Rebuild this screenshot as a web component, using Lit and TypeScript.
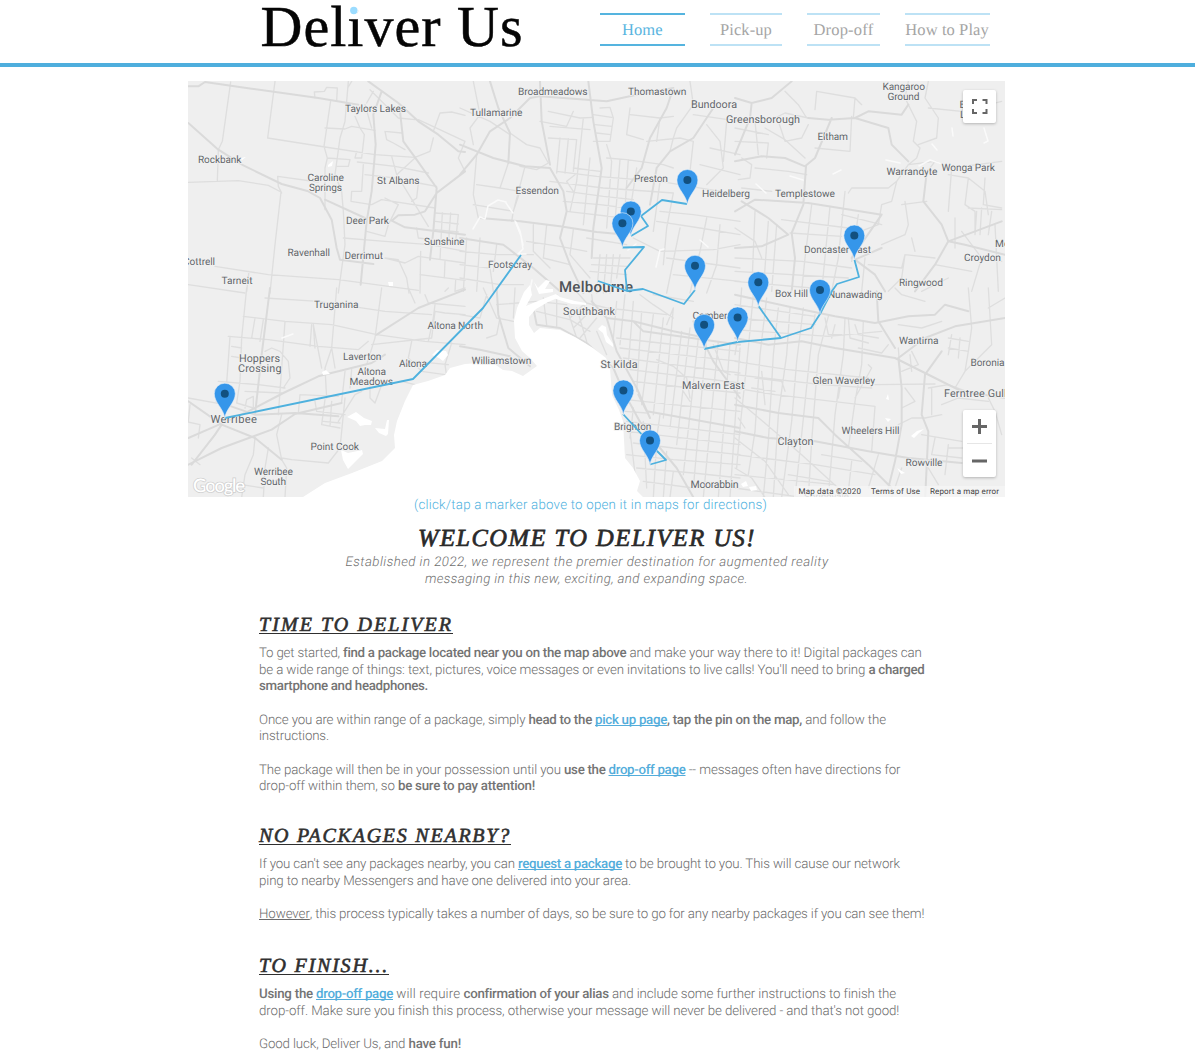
import { LitElement, html, svg, css } from "lit";
import { customElement } from "lit/decorators.js";

/* A run of text: content, drawn width in px, style flags (b bold, a link, u underline). */
type Run = [string, number, string?];

const sections: { title: Run; cls: string; lines: Run[][] }[] = [
  {
    title: ["TIME TO DELIVER", 194],
    cls: "first",
    lines: [
      [["To get started, ", 84], ["find a package located near you on the map above", 283, "b"], [" and make your way there to it! Digital packages can", 295.5]],
      [["be a wide range of things: text, pictures, voice messages or even invitations to live calls! You'll need to bring ", 609.5], ["a charged", 56, "b"]],
      [["smartphone and headphones.", 169, "b"]],
      [],
      [["Once you are within range of a package, simply ", 269.5], ["head to the ", 66.5, "b"], ["pick up page", 72, "b a"], [", tap the pin on the map,", 135, "b"], [" and follow the", 84]],
      [["instructions.", 70]],
      [],
      [["The package will then be in your possession until you ", 305], ["use the ", 44.5, "b"], ["drop-off page", 77, "b a"], [" -- messages often have directions for", 215]],
      [["drop-off within them, so ", 139], ["be sure to pay attention!", 137, "b"]],
    ],
  },
  {
    title: ["NO PACKAGES NEARBY?", 252],
    cls: "second",
    lines: [
      [["If you can't see any packages nearby, you can ", 259], ["request a package", 104, "b a"], [" to be brought to you. This will cause our network", 278]],
      [["ping to nearby Messengers and have one delivered into your area.", 372]],
      [],
      [["However", 50, "u"], [", this process typically takes a number of days, so be sure to go for any nearby packages if you can see them!", 614.5]],
    ],
  },
  {
    title: ["TO FINISH...", 130],
    cls: "third",
    lines: [
      [["Using the ", 57, "b"], ["drop-off page", 77, "b a"], [" will require ", 70.5], ["confirmation of your alias", 145, "b"], [" and include some further instructions to finish the", 287]],
      [["drop-off. Make sure you finish this process, otherwise your message will never be delivered - and that's not good!", 640]],
      [],
      [["Good luck, Deliver Us, and ", 149.5], ["have fun!", 52.5, "b"]],
    ],
  },
];

const nav: [string, number, number][] = [
  ["Home", 85.5, 40.5],
  ["Pick-up", 72.5, 52],
  ["Drop-off", 73, 60],
  ["How to Play", 85, 83.5],
];

/* Map place names: text, left, right, vertical centre, size. */
const places: [string, number, number, number, number?][] = [
  ["Broadmeadows", 518, 587.5, 91.5], ["Thomastown", 628, 686.5, 91.5], ["Taylors Lakes", 345, 406, 108.6],
  ["Tullamarine", 470, 522.5, 112], ["Bundoora", 691, 737, 104.7, 10.8], ["Greensborough", 726, 800, 119.7, 10.8],
  ["Kangaroo", 882.5, 925, 86.6], ["Ground", 887.5, 919.5, 96.7], ["Eltham", 817.5, 848, 136.4],
  ["Rockbank", 198, 241.5, 159.6], ["Caroline", 307.5, 344, 177], ["Springs", 309, 342, 187],
  ["St Albans", 377, 419.5, 180.6], ["Essendon", 515.5, 559, 190.6], ["Preston", 634, 668, 178.8],
  ["Heidelberg", 702, 750, 193.8], ["Templestowe", 775, 835, 193.8], ["Warrandyte", 886.5, 937.5, 171.3],
  ["Wonga Park", 941.5, 995, 167.2], ["Deer Park", 346, 389, 220.4], ["Sunshine", 424, 464.5, 241.2],
  ["Ravenhall", 287.5, 330, 252.8], ["Derrimut", 344.5, 383, 255.3], ["Cottrell", 183, 215, 261],
  ["Tarneit", 221.5, 252.5, 280.3], ["Footscray", 488, 532, 264.7], ["Doncaster East", 804, 871, 249.6],
  ["Mooroolbark", 995, 1055, 243], ["Croydon", 964, 1001, 257.8], ["Ringwood", 899, 943, 282.8],
  ["Southbank", 563, 615, 311.2, 10.8], ["Camberwell", 692.5, 745, 315.2], ["Box Hill", 775, 808, 293.7],
  ["Nunawading", 828, 882.5, 294.6], ["Truganina", 314, 358.5, 304.7], ["Altona North", 427.5, 483, 325.2],
  ["Hoppers", 239, 280, 358, 10.8], ["Crossing", 238, 281.5, 368.7, 10.8], ["Laverton", 343, 381.5, 356.8],
  ["Altona", 399, 427, 363.7], ["Altona", 357.5, 386, 371], ["Meadows", 349.5, 393, 381],
  ["Williamstown", 471.5, 531.5, 360.2], ["St Kilda", 600.5, 637.5, 364.4, 10.8], ["Malvern East", 682, 744.5, 385, 10.8],
  ["Glen Waverley", 812.5, 875, 380.2], ["Wantirna", 899, 938.5, 340.2], ["Boronia", 970.5, 1004.5, 362.8],
  ["Ferntree Gully", 944, 1012, 393.7, 10.8], ["Werribee", 210.5, 257, 419.6, 11.2], ["Point Cook", 310.5, 359, 446.8],
  ["Werribee", 254, 293, 471.8], ["South", 260.5, 286, 481.8], ["Brighton", 614, 651.5, 426.8],
  ["Moorabbin", 690.5, 738.5, 484.3, 10.6], ["Clayton", 777.5, 813.5, 441.8, 10.8], ["Wheelers Hill", 841.5, 899.5, 430.1],
  ["Rowville", 905.5, 942.5, 462.6], ["Springvale", 804, 849, 496],
];

const pins: [number, number][] = [
  [224.8, 393.7], [687.4, 180], [630.8, 211.5], [622.4, 223.2], [854.3, 235.5], [695, 265.8],
  [758.3, 282.2], [820, 289.9], [737.6, 317.4], [704.1, 324.8], [623.4, 390.4], [650, 440.4],
];

const routes = [
  "M225 418 L413 379 L483 308 L521 255",
  "M687 204 L662 200 L641 216 L648 226 L631 236",
  "M622.5 247.5 L644 247 L625 270 L627 291",
  "M598 281 L627 291 L643 289 L684 304 L695 290",
  "M704 349 L737.5 342 L781 338 L811 328 L820 314 L832 291 L837 284 L859 277 L854.5 260",
  "M758.5 306 L781 338",
  "M623 414 L657 451 L666 460 L650 464.5",
];

/* Roads are stored per map tile at three units per pixel. */
const tiles: { x: number; y: number; major: string; minor: string }[] = [
  {
    x: 185, y: 78,
    major: "M10 135L100 215 175 262 290 318 370 340 405 360 440 425 455 510 465 545 565 558M420 365L540 420M620 428L660 448 840 470M550 10L640 75 700 130 760 170 820 220 840 222M10 25L40 25 60 12 200 32 400 60 520 80M590 40L565 110 572 200 560 340 545 430 527 620M645 100L655 190 690 238 755 330 745 460 735 545M840 280L755 345 720 400 690 410 640 412 620 428",
    minor: "M137 12L112 190 100 215 97 308M270 10L248 180 420 207 570 230 690 238 735 220 745 180M745 160L765 105 800 102 840 112M10 313L160 308 250 322 288 342 270 500 255 645M290 345L280 325 278 295 400 312M437 68L417 205 427 240 420 270 420 395M490 10L480 130 465 180 450 290 470 340 475 400 480 500 460 645M500 10L488 30M390 60L388 42 418 40 425 28 457 30 455 68M420 150L480 153 500 145 570 157M510 115L525 150 538 170 530 240 510 240 515 220M600 160L650 165M600 160L605 185 625 195 660 215M427 240L495 245 490 265 457 265M517 252L630 265 730 285M535 260L530 340 500 340 498 370 560 380 590 365 750 390M540 290L630 300M475 480L600 490 735 500 840 520M545 460L600 475 610 440 640 380 600 360M600 540L640 545 665 600 672 645M600 540L660 555 700 535 840 555M707 520L705 645M705 590L840 607M780 550L778 600M812 607L810 640 840 630M750 405L820 410M750 430L820 438M750 455L820 462M772 405L765 545M797 405L790 500M820 410L812 490M695 450L700 480 740 485M90 565L250 590 460 605 700 637M10 620L180 645M192 580L185 640M620 235L635 290 730 445M635 290L690 240M755 325L700 315 695 360 680 370M700 125L840 190M840 190L820 240 840 280M540 80L560 150M555 35L600 80 640 120 690 125M565 40L545 75",
  },
  {
    x: 460, y: 78,
    major: "M90 10L115 90 150 165 145 255M0 200L100 240 195 265 270 270 310 340 320 400 300 480 330 560 370 645M240 10L245 130 270 260M385 10L400 130 425 270 400 450 395 540M0 290L50 230 90 160 150 120 210 60 240 55 440 70 530 50 640 30M770 75L700 180 630 220 590 270 570 380M640 30L620 90 570 180 545 270 500 330M60 420L180 430 300 445 410 462 500 470M0 480L130 500 220 570 300 640",
    minor: "M40 10L60 110 30 150 40 200M0 90L90 130 150 170M150 165L200 200 240 210 265 255 230 275 180 265M50 230L40 350 55 420M145 255L120 330 50 320M195 265L160 400 155 430M120 330L180 340 160 400 40 380M290 280L410 295 600 310 840 350M270 310L430 330 640 345M320 340L430 355 520 365M310 370L420 380 500 390M320 400L490 420M420 90L450 88 460 120 450 190 400 190M400 110L455 118M405 140L455 145M410 165L452 170M265 100L360 120 400 118M270 145L390 155M265 180L350 185 340 280M300 180L290 285M325 182L315 285M370 120L350 310 330 400M390 240L370 440M340 270L420 280M240 130L320 145 340 100M440 240L500 245 610 260 640 270M440 200L455 250 440 450M480 245L465 430M505 245L490 460M530 270L510 400M560 190L660 180 700 190M510 110L600 120 640 115M510 90L500 170 550 185M690 10L700 80 650 150 640 180 630 220M600 120L590 190M640 345L620 450 610 560M600 310L580 460M700 190L690 280 700 330M740 140L780 190 790 270 740 320M700 110L840 130M750 210L840 230M720 260L840 290M800 130L790 250M600 400L700 410 840 430M590 430L720 450 840 470M520 480L600 520 760 515 840 500M660 450L620 645M740 420L720 520 690 645M780 440L770 560 740 645M620 540L840 570M640 590L840 610M0 520L110 530 220 530M0 560L90 570 100 640M60 480L50 640M20 480L10 640M110 500L100 580M220 440L220 520 270 570M260 440L250 540 330 560M340 455L330 530 390 600M400 540L510 540M395 560L500 565M390 580L500 590M420 530L410 645M440 530L430 645M460 530L450 645M480 530L470 600M0 600L120 620 190 620M200 490L300 505 380 520M380 480L500 500M345 290L320 310 340 340",
  },
  {
    x: 735, y: 78,
    major: "M50 75L110 60 170 10M50 75L45 120 0 230M0 400L60 365 220 375 440 410M0 60L50 75M220 120L280 125 360 120 460 150 470 200 520 250M360 120L400 100 500 110 520 80M0 250L80 235 150 240 210 265 240 240 290 120M213 265L205 380 170 465 180 540 170 640M575 285L565 370 620 440 640 490 800 430M0 510L80 505 160 470 100 420 20 370M440 510L360 545 420 590 450 640M440 410L350 540M540 640L600 560 640 490 690 500 810 530",
    minor: "M245 40L240 95M150 40L190 80 215 120M100 130L150 105 220 120M90 150L150 185 210 240M130 130L150 190 200 180 220 140M0 190L100 195 95 240M60 130L70 230M245 40L360 60 380 80M355 120L360 60M350 115L345 220 240 210M20 240L50 260 45 300 10 305M60 270L160 280 215 290M520 10L510 60 545 130 535 190 555 210 545 240 520 260M580 10L570 60 610 120 605 180 550 200M580 90L680 100 800 70M485 310L460 330 350 330 340 345M485 310L470 370 440 380 430 440 350 470M485 310L520 260 600 250 570 290M510 370L520 440 510 470 440 500M575 370L500 380M600 250L650 270 800 250M650 270L640 400M640 290L700 300 750 340 760 410M700 300L690 380 720 400 720 470M750 300L745 380 800 390M725 400L720 470M740 390L735 470M700 390L800 395M770 400L760 470M680 460L740 540 710 640M690 540L800 550M60 400L50 640M100 430L85 640M125 440L110 640M230 380L210 540 200 640M285 385L260 640M330 340L310 540 290 640M370 410L350 550M140 425L340 450M165 465L320 475M0 540L200 550 350 570M0 580L340 600M0 610L230 630M390 540L380 640M400 560L500 570 510 530 600 540M510 530L500 600 460 640M640 600L560 640M600 560L710 580M0 450L60 490 80 540M20 330L110 340M320 410L440 440M530 480L540 520M0 150L100 170M660 420L660 510M780 440L790 640",
  },
  {
    x: 185, y: 288,
    major: "M10 450L90 415 190 370 295 315 400 265 460 250 560 225 600 200M10 530L110 480 260 425 330 378 470 345M10 340L110 410 210 450 290 515M575 140L700 60 840 5M120 395L90 440 20 530M210 380L230 200 255 0M95 340L210 380 330 375 460 385",
    minor: "M185 0L170 150 165 280 155 345M175 85L300 100 440 110 575 140 720 160 840 170M130 145L250 155 400 175 520 185 550 160M135 145L125 285 115 340M140 175L170 180M140 205L170 210M300 100L280 380M210 90L200 150M235 95L225 160M455 0L440 180 420 240 425 330M590 0L570 150 545 230M100 280L220 290 300 300M240 190L260 180 285 190 310 220 315 270 295 300M410 240L385 110 390 180M380 110L375 175M390 340L395 370 480 380M345 320L340 375M345 320L460 325M420 335L410 410 465 420M440 340L435 415M480 330L465 480 430 525 320 515 290 510M460 400L510 320 530 310M415 400L465 405M290 515L275 440 290 380M290 515L305 540 300 628M210 450L205 500 180 560 170 628M250 480L240 540 235 628M0 400L45 410 40 450M10 330L120 350M15 350L10 400M75 460L90 440M20 510L45 530M170 590L235 600M155 345L205 360 205 325 185 335 180 360M560 170L740 150 750 70 780 75 840 80M720 20L730 45 840 55M670 0L690 45M750 50L745 90 730 160M780 10L790 0M680 160L670 210 710 250 780 260M690 220L790 230M800 165L780 230 785 265M650 280L690 290 680 305M555 290L555 330 570 345 590 290M240 30L400 40 600 70 740 80M440 180L450 240M480 250L470 340M500 245L495 300M180 310L290 315",
  },
  {
    x: 460, y: 288,
    major: "M220 60L230 110 300 120 380 165 460 240 490 310 550 420 600 480 650 540 700 628M440 90L470 190 530 300 570 390M395 40L440 90 520 100 640 130 740 150M110 0L115 80 145 180 210 235M0 175L60 185 150 205M520 100L550 130 840 170M535 320L560 370 620 380 840 420M700 100L760 220 840 330",
    minor: "M110 50L230 40 320 50M165 0L160 90M0 80L60 90 80 20M70 0L110 90 160 100M80 150L110 140 120 90M250 30L260 110M290 20L290 115M230 70L330 95 390 130M320 60L350 150M350 60L380 160M330 90L370 50 400 80M340 120L390 70M360 150L410 90M410 130L440 200M340 0L380 45 440 60 620 80M395 20L400 60M470 40L460 150M495 20L480 170M520 40L505 230M545 70L530 310M580 80L545 350M610 90L580 380M640 60L610 390M665 130L630 420M690 120L650 470M715 150L670 560M740 150L700 600M775 160L730 628M810 165L775 628M840 180L810 628M470 150L600 165 840 190M480 180L700 205 840 220M490 210L640 230 840 255M510 245L840 285M520 280L690 300 840 315M500 335L640 350 840 370M495 370L560 375M500 400L840 440M500 430L840 470M520 465L640 480 840 500M500 500L640 515 840 530M530 540L700 555 840 570M550 580L700 600M510 430L530 600M550 400L560 600M590 460L580 628M620 490L610 628M640 550L630 628M580 20L640 30 700 40M540 20L580 50 640 90M590 215L640 235 680 270 690 330M600 380L590 450M520 360L510 450M640 60L620 110M760 170L790 250 810 260M690 340L670 310",
  },
  {
    x: 735, y: 288,
    major: "M0 150L100 170 200 160 300 180 480 210 600 270 680 310 810 330M0 350L130 375 250 390 300 440 400 530 470 600M0 430L100 450 240 460 400 490 520 510 680 525M490 210L500 300 500 410 480 520 460 600M490 210L570 150 660 115 810 90M425 10L430 100 480 180M570 640L580 430 560 380 570 260 620 190M0 20L180 60 300 85 420 105 520 85 600 80 630 50 700 70",
    minor: "M20 0L10 140 0 200M55 20L40 180 15 420 5 540M95 30L75 200 60 430 40 560M130 60L115 200 100 460 85 628M165 60L155 200 130 380 115 628M205 60L185 220 170 400 140 628M240 80L225 200 200 440 180 628M280 85L250 200 230 460 220 628M330 90L325 200 300 380 280 628M385 100L380 230 360 340 340 480M0 50L100 65 240 85M0 90L240 110M0 125L280 145 440 130M0 220L160 245 400 270M0 260L260 290 410 300M0 300L120 320 420 355 410 490 M400 230L410 240 360 330M270 90L280 140 320 140M340 90L345 150 400 165M300 110L290 150M360 110L370 140 430 150M370 180L440 195 460 170M420 290L600 288M500 250L550 230 530 190M510 300L540 340 500 360M490 410L530 390 570 390 620 380M580 300L640 290 720 320M590 300L590 380M620 350L670 330 760 340M700 190L710 120 700 0M640 150L700 160M640 180L700 190M650 140L640 200M675 150L670 210M700 190L690 250 660 300M760 0L770 170 690 250M760 60L810 30M480 0L500 20 570 40M490 180L495 250M525 200L530 250M560 440L680 460M640 470L630 560M640 480L710 480M600 450L590 500 680 510M760 330L780 370 800 440M580 540L610 590M500 540L470 628M0 500L240 530 420 560M0 560L300 590M0 600L200 628M430 500L400 600M0 330L60 380 200 500 340 628M0 450L90 520 160 620M10 390L30 420M60 270L140 280 150 310M80 250L90 350M50 300L120 310M490 110L560 120 620 100M320 270L310 330M260 500L380 520M350 520L340 610M160 560L280 580M0 540L50 570 90 628",
  },
];

const water = [
  "M303 497L325 483 352 473 382 461 395 448 394 435 397 421 405 401 413 385 428 381 445 375 450 368 465 364 480 363 493 363 503 370 512 371 523 376 537 366 530 358 522 351 515 338 514 321 517 308 524 292 530 285 532 295 526 306 538 301 548 297 556 294 560 297 548 302 536 309 529 317 529 325 534 333 540 328 560 330 575 337 593 348 606 358 610 368 612 395 619 410 623 421 624 440 625 458 633 468 640 481 637 491 643 497Z",
  "M534 282L538 288 546 280 550 281 545 289 553 289 553 292 539 294Z",
  "M556 296L575 301 586 303 586 305 572 304 556 299Z",
  "M598 329l4-4 4 2 1 8 6 9 0 3-7-5-3-9z",
  "M347 417l9-5 8 6 8 3-1 4-6 0-5 1-4-5z",
  "M375 428l10 1 2-9 2 0-1 14-2 2-7-3z",
  "M341 450l7 3 14-3 1 4-8 8-7 7-5-9z",
  "M432 355l5-5 9 1 2 4-5 6-4-3z",
  "M322 372l4-2 4 4-7 1z",
  "M911 436l6-5 7-2-5 4-5 5z", "M885 418l6 1-3 3z", "M897 468l8 5-4 1z", "M886 399l2-5 1 6z",
  "M328 165l5-4-1 5-4 1z", "M388 282l5 0 0 4-4 0z", "M240 158l6-1-4 3z",
  "M741 484l5-3 2 5-5 1z", "M749 487l7-1 1 4-6 1z",
];
const creeks = "M515 221L521 236 523 249 518 254 526 254M473 229L480 217 485 219 488 206 498 200 506 202M506 203L513 213M516 222L520 231 523 245M656 267L660 250 664 249M700 240L708 247M790 176L803 180M833 174L841 170M932 144L937 150M952 128L953 136M984 128L988 141 984 143M886 160L900 163M919 166L930 160 942 164M628 250L636 244M282 338L293 334M532 280L529 295 522 300M756 184L766 193";

@customElement("app-root")
export class AppRoot extends LitElement {
  static styles = css`
    :host { display: block; height: 1054px; overflow: hidden; background: #fff; font-family: Roboto, "Liberation Sans", sans-serif; text-rendering: geometricPrecision; }
    .header { display: flex; box-sizing: border-box; width: 1195px; height: 67px; padding-left: 260px; border-bottom: 4px solid #4eaedd; }
    .logo { width: 339.5px; height: 63px; }
    .logo text { font: 58px "Liberation Serif", serif; fill: #050505; stroke: #050505; stroke-width: 0.5px; }
    .nav { display: flex; gap: 24.7px; padding-top: 13px; }
    .item { box-sizing: border-box; height: 33px; border: solid #bde2f5; border-width: 2px 0; color: #a5a5a5; font: 16.5px/29px "Liberation Serif", serif; text-align: center; text-decoration: none; white-space: nowrap; }
    .item.on { border-color: #55b4df; color: #5ab5e0; }
    .map { position: relative; width: 817px; height: 416px; margin: 14px 0 0 188px; }
    .canvas { display: block; width: 817px; height: 416px; }
    .major, .minor, .creek, .route { fill: none; stroke-linejoin: round; stroke-linecap: round; }
    .major { stroke: #dadada; stroke-width: 6px; }
    .minor { stroke: #dedede; stroke-width: 4px; }
    .creek { stroke: #fafafa; stroke-width: 1.5px; }
    .route { stroke: #4eb1de; stroke-width: 1.8px; stroke-linecap: butt; }
    .water { fill: #fff; }
    .place { fill: #62666a; stroke: #f1f1f1; stroke-width: 1.6px; paint-order: stroke; font-family: Roboto, sans-serif; }
    .city { fill: #505458; font-weight: 500; }
    .google { font: 500 18.5px Lato, sans-serif; fill: #fff; stroke: #cfcfcf; stroke-width: 1.6px; paint-order: stroke; }
    .legal { font: 8px Roboto, sans-serif; fill: #444; }
    .control { position: absolute; left: 775px; width: 33px; background: #fff; border-radius: 2px; box-shadow: 0 1px 3px rgba(0, 0, 0, 0.25); }
    .full { top: 9px; height: 33px; }
    .zoom { top: 329px; height: 67px; }
    .control svg { display: block; }
    .caption { margin: 0 0 0 414px; padding-top: 1.2px; font-size: 13.3px; font-weight: 300; line-height: 16px; color: #4eb1de; }
    .welcome { margin: 11px 0 0 418px; font: italic 24.5px/28px "Liberation Serif", serif; color: #2a2a2a; -webkit-text-stroke: 0.7px #2a2a2a; }
    .tag { color: #707070; font-style: italic; font-weight: 300; font-size: 13.3px; line-height: 16.67px; }
    .tag1 { margin-left: 345.5px; margin-top: 2px; }
    .tag2 { margin-left: 425px; }
    .section { margin-left: 259px; }
    .first { margin-top: 24.6px; }
    .second { margin-top: 28.2px; }
    .third { margin-top: 30.5px; }
    .title { margin: 0 0 9px; font: italic 20px/24px "Liberation Serif", serif; color: #2f2f2f; -webkit-text-stroke: 0.6px #2f2f2f; }
    .title .fit { text-decoration: underline; text-decoration-thickness: 1.4px; text-underline-offset: 2px; text-decoration-skip-ink: none; }
    .line { height: 16.67px; line-height: 16.67px; font-size: 13.3px; font-weight: 300; color: #6c6c6c; white-space: pre; }
    .fit { white-space: pre; }
    .b { font-weight: 500; color: #747474; }
    .a { color: #53addb; text-decoration: underline; text-decoration-skip-ink: none; text-underline-offset: 1px; }
    .u { text-decoration: underline; text-underline-offset: 1px; }
  `;

  /* Spreads each run over its intended width by letter spacing. */
  firstUpdated() {
    this.renderRoot.querySelectorAll<HTMLElement>(".fit").forEach((el) => {
      const count = (el.textContent || "").length;
      const gap = (Number(el.dataset.w) - el.getBoundingClientRect().width) / count;
      el.style.letterSpacing = gap.toFixed(4) + "px";
    });
  }

  run([text, width, flags = ""]: Run) {
    return flags.includes("a")
      ? html`<a class="fit ${flags}" data-w=${width}>${text}</a>`
      : html`<span class="fit ${flags}" data-w=${width}>${text}</span>`;
  }

  label([text, x0, x1, y, size = 10.2]: [string, number, number, number, number?]) {
    return svg`<text class="place" x=${x0} y=${y + 3.6} font-size=${size} textLength=${x1 - x0}>${text}</text>`;
  }

  render() {
    return html`
      <header class="header">
        <svg class="logo" viewBox="260 0 339.5 63">
          <text x="260.5" y="46" textLength="262">Deliver Us</text>
          <circle cx="353.8" cy="9.5" r="5.2" fill="#fff" />
          <circle cx="353.8" cy="10.5" r="3.7" fill="#9bdcff" />
        </svg>
        <nav class="nav">
          ${nav.map(([t, w, tw], i) => html`<a class="item ${i ? "" : "on"}" style="width:${w}px">${this.run([t, tw])}</a>`)}
        </nav>
      </header>
      <div class="map">
        <svg class="canvas" viewBox="188 81 817 416">
          <rect x="188" y="81" width="817" height="416" fill="#efefef" />
          ${tiles.map((t) => svg`<g transform="translate(${t.x} ${t.y}) scale(0.33333)"><path class="minor" d=${t.minor} /><path class="major" d=${t.major} /></g>`)}
          <path class="creek" d=${creeks} />
          ${water.map((d) => svg`<path class="water" d=${d} />`)}
          ${places.map((p) => this.label(p))}
          <text class="place" x="959.5" y="108" font-size="10.2">B</text>
          <text class="place" x="960" y="118" font-size="10.2">L</text>
          <text class="place city" x="559" y="292.2" font-size="15" textLength="74">Melbourne</text>
          ${routes.map((d) => svg`<path class="route" d=${d} />`)}
          ${pins.map(([x, y]) => svg`<g transform="translate(${x} ${y})">
            <path d="M0 24.5C-1 15 -10.5 9 -10.5 0A10.5 10.5 0 0 1 10.5 0C10.5 9 1 15 0 24.5Z" fill="#3596ea" stroke="#e6f0f8" stroke-width="0.6" />
            <circle r="4" fill="#12507f" /></g>`)}
          <rect x="794" y="486" width="211" height="11" fill="#f5f5f5" fill-opacity="0.8" />
          <text class="google" x="193" y="492" textLength="52">Google</text>
          <text class="legal" x="798.5" y="494" textLength="62.5">Map data ©2020</text>
          <text class="legal" x="871" y="494" textLength="49">Terms of Use</text>
          <text class="legal" x="930" y="494" textLength="69">Report a map error</text>
        </svg>
        <div class="control full">
          <svg width="33" height="33" viewBox="0 0 33 33"><path d="M10 14V10h4M19.500 10h4v4M23.500 19v4h-4M14 23h-4v-4" fill="none" stroke="#666" stroke-width="2" /></svg>
        </div>
        <div class="control zoom">
          <svg width="33" height="67" viewBox="0 0 33 67"><path d="M9 16.500H24M16.500 9V24M9 51H24" stroke="#666" stroke-width="3" /><path d="M4 33.500H29" stroke="#e6e6e6" /></svg>
        </div>
      </div>
      <div class="caption">${this.run(["(click/tap a marker above to open it in maps for directions)", 353])}</div>
      <h1 class="welcome">${this.run(["WELCOME TO DELIVER US!", 338])}</h1>
      <div class="tag tag1">${this.run(["Established in 2022, we represent the premier destination for augmented reality", 483])}</div>
      <div class="tag tag2">${this.run(["messaging in this new, exciting, and expanding space.", 323])}</div>
      ${sections.map((s) => html`<section class="section ${s.cls}">
        <h2 class="title">${this.run(s.title)}</h2>
        ${s.lines.map((l) => html`<div class="line">${l.map((r) => this.run(r))}</div>`)}
      </section>`)}
    `;
  }
}
